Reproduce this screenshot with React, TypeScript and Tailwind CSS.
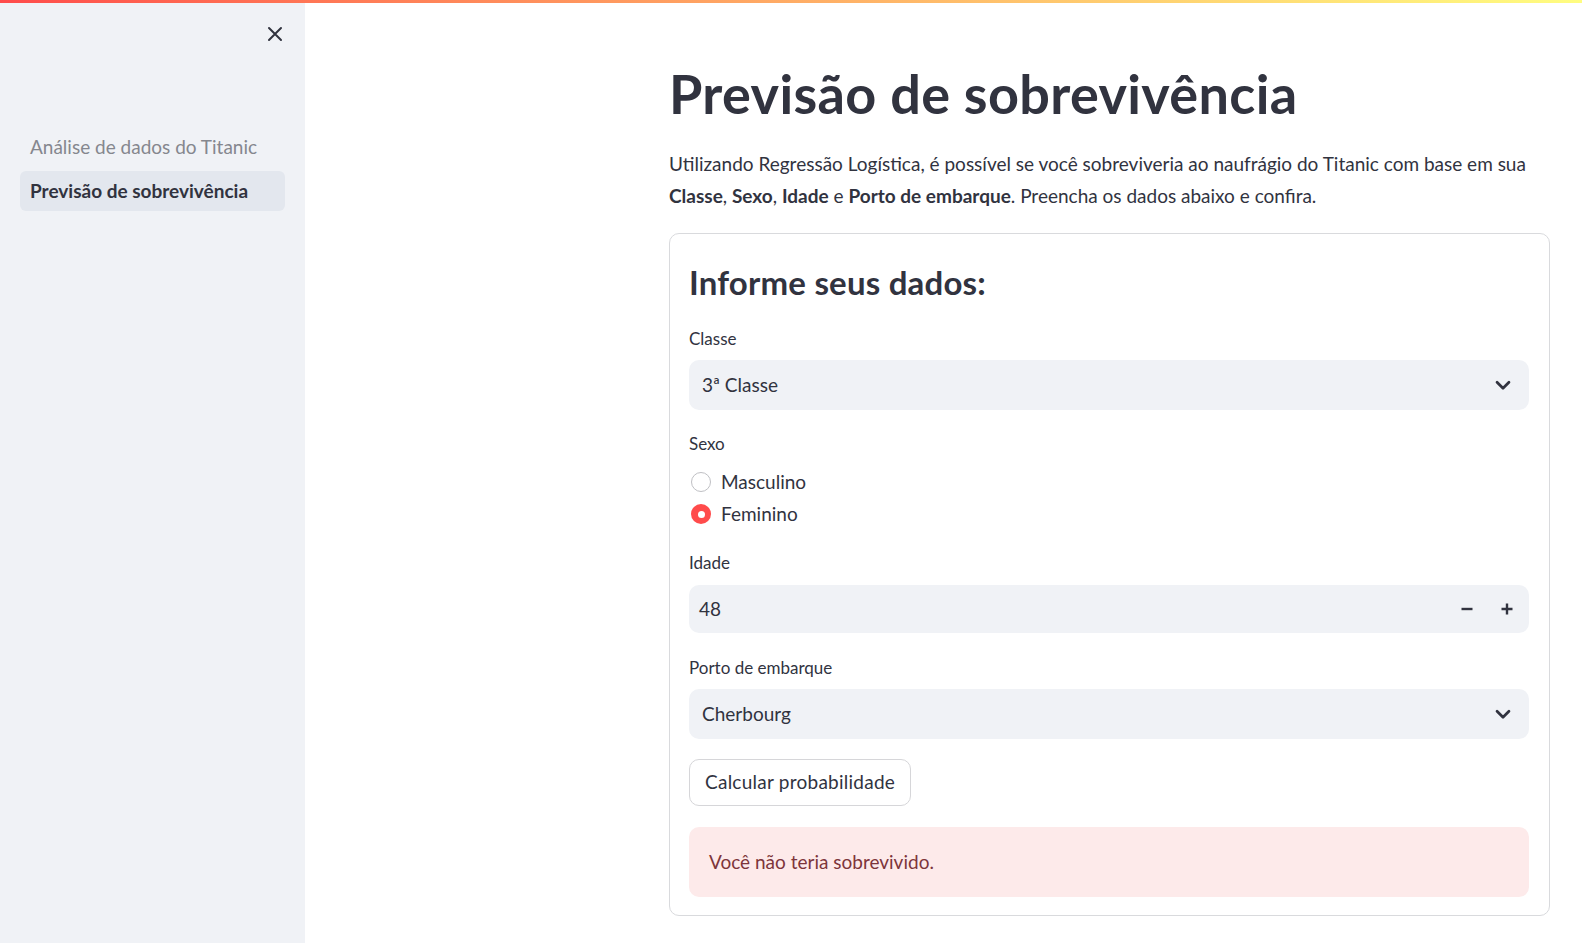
import React from "react";

const Chevron = () => (
  <svg width="22" height="22" viewBox="0 0 24 24" fill="none" stroke="#31333f" strokeWidth="3" strokeLinecap="round" strokeLinejoin="round">
    <path d="M5.5 9l6.5 6.5 6.5-6.5" />
  </svg>
);

const Label = ({ children }: { children: React.ReactNode }) => (
  <div className="text-[17px] leading-[20px] text-[#31333f]">{children}</div>
);

const SelectBox = ({ value }: { value: string }) => (
  <div className="mt-[11px] flex h-[50px] items-center justify-between rounded-[10px] bg-[#f0f2f6] pl-[13px] pr-[15px]">
    <span className="text-[19px] text-[#31333f]">{value}</span>
    <Chevron />
  </div>
);

const Radio = ({ label, checked }: { label: string; checked?: boolean }) => (
  <div className="flex h-[32px] items-center gap-[10px] pl-[2px]">
    {checked ? (
      <span className="flex h-[20px] w-[20px] items-center justify-center rounded-full bg-[#ff4b4b]">
        <span className="h-[7px] w-[7px] rounded-full bg-white" />
      </span>
    ) : (
      <span className="h-[20px] w-[20px] rounded-full border border-[#bfc0c4] bg-white" />
    )}
    <span className="text-[19px] text-[#31333f]">{label}</span>
  </div>
);

const App = () => {
  return (
    <div className="flex h-[943px] w-full flex-col overflow-hidden bg-white font-['Lato',sans-serif] text-[#31333f]">
      <div className="h-[3px] w-full shrink-0 bg-gradient-to-r from-[#ff4b4b] to-[#fffd80]" />
      <div className="flex flex-1">
        {/* sidebar */}
        <aside className="w-[305px] shrink-0 bg-[#f0f2f6]">
          <div className="flex h-[62px] items-center justify-end pr-[22px]">
            <svg width="16" height="16" viewBox="0 0 16 16" stroke="#31333f" strokeWidth="2" strokeLinecap="round">
              <path d="M2 2l12 12M14 2L2 14" />
            </svg>
          </div>
          <nav className="mt-[62px] flex flex-col gap-[4px] px-[20px]">
            <div className="flex h-[40px] items-center rounded-[6px] pl-[10px] text-[19px] text-[#85878e]">
              Análise de dados do Titanic
            </div>
            <div className="flex h-[40px] items-center rounded-[6px] bg-[#e3e7ee] pl-[10px] text-[19px] font-bold text-[#31333f]">
              Previsão de sobrevivência
            </div>
          </nav>
        </aside>

        {/* main */}
        <main className="flex-1 pl-[364px]">
          <div className="w-[881px]">
            <h1 className="mt-[59px] text-[54px] font-bold leading-[64px] tracking-[0.35px] text-[#31333f]">
              Previsão de sobrevivência
            </h1>
            <p className="mt-[22px] text-[19px] leading-[32px]">
              Utilizando Regressão Logística, é possível se você sobreviveria ao naufrágio do Titanic com base em sua{" "}
              <br />
              <b>Classe</b>, <b>Sexo</b>, <b>Idade</b> e <b>Porto de embarque</b>. Preencha os dados abaixo e confira.
            </p>

            <section className="mt-[21px] rounded-[10px] border border-[#d9dadd] pb-[18px] pl-[19px] pr-[20px] pt-[20px]">
              <h3 className="mt-[8px] text-[33px] font-bold leading-[40px] tracking-[0.2px]">Informe seus dados:</h3>

              <div className="mt-[27px]">
                <Label>Classe</Label>
                <SelectBox value="3ª Classe" />
              </div>

              <div className="mt-[24px]">
                <Label>Sexo</Label>
                <div className="mt-[12px] flex flex-col">
                  <Radio label="Masculino" />
                  <Radio label="Feminino" checked />
                </div>
              </div>

              <div className="mt-[23px]">
                <Label>Idade</Label>
                <div className="mt-[12px] flex h-[48px] items-center rounded-[10px] bg-[#f0f2f6] pr-[2px]">
                  <span className="flex-1 pl-[10px] text-[19px]">48</span>
                  <div className="flex h-full w-[40px] items-center justify-center">
                    <svg width="12" height="12" viewBox="0 0 12 12" stroke="#31333f" strokeWidth="2.4">
                      <path d="M0.5 6h11" />
                    </svg>
                  </div>
                  <div className="flex h-full w-[40px] items-center justify-center">
                    <svg width="12" height="12" viewBox="0 0 12 12" stroke="#31333f" strokeWidth="2.4">
                      <path d="M0.5 6h11M6 0.5v11" />
                    </svg>
                  </div>
                </div>
              </div>

              <div className="mt-[25px]">
                <Label>Porto de embarque</Label>
                <SelectBox value="Cherbourg" />
              </div>

              <button className="mt-[20px] flex h-[47px] items-center rounded-[10px] border border-[#d6d6d9] bg-white px-[15px] text-[19px] tracking-[0.25px] text-[#31333f]">
                Calcular probabilidade
              </button>

              <div className="mt-[21px] flex h-[70px] items-center rounded-[10px] bg-[#fdeaea] pl-[20px] text-[19px] text-[#7d353b]">
                Você não teria sobrevivido.
              </div>
            </section>
          </div>
        </main>
      </div>
    </div>
  );
};

export default App;
